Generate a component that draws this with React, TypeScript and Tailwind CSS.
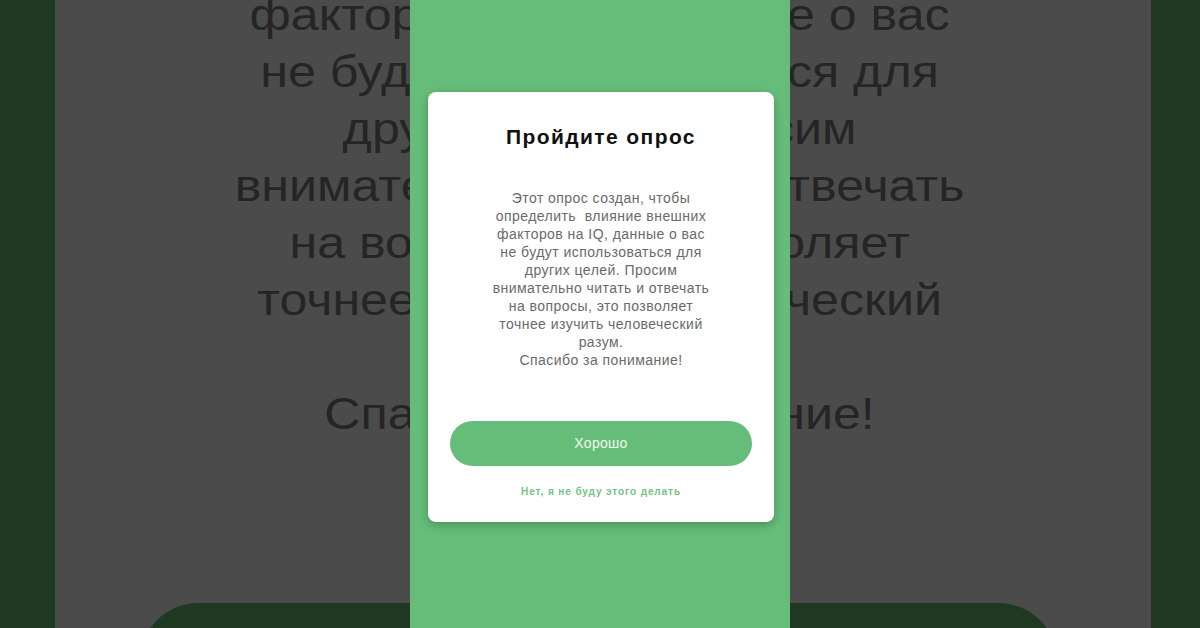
import React from "react";

const bigLines = [
  "факторов на IQ, данные о вас",
  "не будут использоваться для",
  "других целей. Просим",
  "внимательно читать и отвечать",
  "на вопросы, это позволяет",
  "точнее изучить человеческий",
  "разум.",
  "Спасибо за понимание!",
];

const smallLines = [
  "Этот опрос создан, чтобы",
  "определить\u00a0 влияние внешних",
  "факторов на IQ, данные о вас",
  "не будут использоваться для",
  "других целей. Просим",
  "внимательно читать и отвечать",
  "на вопросы, это позволяет",
  "точнее изучить человеческий",
  "разум.",
  "Спасибо за понимание!",
];

export default function App() {
  return (
    <div
      className="relative w-[1200px] h-[628px] overflow-hidden bg-[#1f3822] flex"
      style={{ fontFamily: '"Liberation Sans", Arial, sans-serif' }}
    >
      {/* blurred enlarged background */}
      <div className="ml-[55px] w-[1096px] h-full bg-[#4b4b4b] flex flex-col items-center overflow-hidden">
        <div className="mt-[-14px] pr-[6px] w-full text-center text-[44px] leading-[57px] text-[#252525] whitespace-nowrap scale-x-[1.14]">
          {bigLines.map((l, i) => (
            <div key={i}>{l}</div>
          ))}
        </div>
        <div className="mt-[161px] ml-[-9px] w-[919px] h-[120px] shrink-0 rounded-t-[60px] bg-[#1f3822]" />
      </div>

      {/* foreground phone column */}
      <div className="absolute left-[410px] top-0 w-[380px] h-full bg-[#66bd79] flex flex-col items-center">
        <div className="mt-[92px] ml-[2px] w-[346px] bg-white rounded-[8px] shadow-[0_3px_10px_rgba(0,0,0,0.25)] flex flex-col items-center pt-[31px] pb-[23px]">
          <div className="text-[21px] leading-[28px] font-bold tracking-[1.4px] text-[#111]">
            Пройдите опрос
          </div>
          <div className="mt-[38px] text-center text-[14px] leading-[18px] tracking-[0.45px] text-[#6a6a6a] whitespace-nowrap">
            {smallLines.map((l, i) => (
              <div key={i}>{l}</div>
            ))}
          </div>
          <div className="mt-[52px] w-[302px] h-[45px] rounded-full bg-[#66bd79] flex items-center justify-center text-[14px] tracking-[0.3px] text-[#eef8f0]">
            Хорошо
          </div>
          <div className="mt-[19px] text-[10px] leading-[14px] font-bold tracking-[0.9px] text-[#74c286]">
            Нет, я не буду этого делать
          </div>
        </div>
      </div>
    </div>
  );
}
